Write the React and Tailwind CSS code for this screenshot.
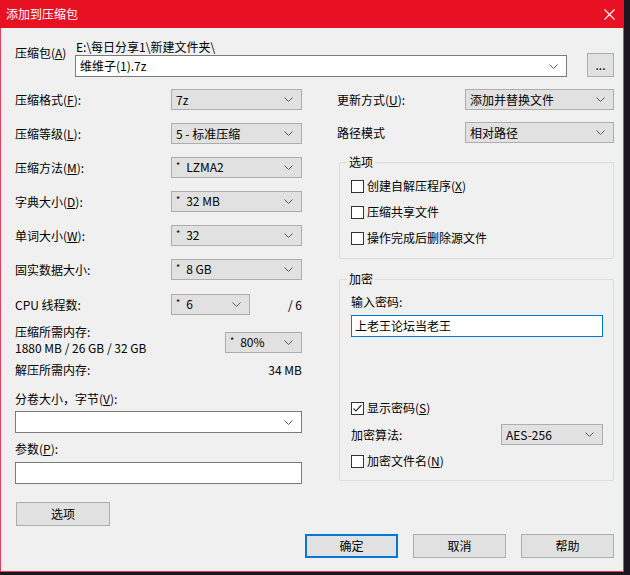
import React from 'react';

function Chevron() {
  return (
    <svg width="9" height="5" viewBox="0 0 9 5" className="shrink-0">
      <path d="M0.5 0.5 L4.5 4.5 L8.5 0.5" fill="none" stroke="#5a5a5a" strokeWidth="1" />
    </svg>
  );
}

function Star() {
  return <span className="text-[9px] relative -top-[3px] mr-[6px]">*</span>;
}

// 下拉框
function Combo({ value, star, white, className = '' }) {
  return (
    <div
      className={`flex items-center justify-between border pl-[4px] pr-[8px] leading-[16px] ${
        white ? 'bg-white border-[#7a7a7a]' : 'bg-[#e1e1e1] border-[#adadad]'
      } ${className}`}
    >
      <span className="whitespace-nowrap">
        {star && <Star />}
        {value}
      </span>
      <Chevron />
    </div>
  );
}

function Check({ checked, children }) {
  return (
    <div className="flex items-center h-[16px] leading-[16px]">
      <span className="w-[13px] h-[13px] border border-[#333333] bg-white flex items-center justify-center mr-[3px]">
        {checked && (
          <svg width="11" height="11" viewBox="0 0 11 11">
            <path d="M1.5 5.5 L4 8 L9.5 2" fill="none" stroke="#333333" strokeWidth="1.2" />
          </svg>
        )}
      </span>
      <span>{children}</span>
    </div>
  );
}

function Button({ children, primary, className = '' }) {
  return (
    <div
      className={`flex items-center justify-center bg-[#e1e1e1] h-[24px] w-[93px] ${
        primary ? 'border-2 border-[#0078d7]' : 'border border-[#adadad]'
      } ${className}`}
    >
      {children}
    </div>
  );
}

function Row({ label, children }) {
  return (
    <div className="flex items-center justify-between h-[21px]">
      <span className="leading-[16px]">{label}</span>
      {children}
    </div>
  );
}

function Group({ title, className = '', children }) {
  return (
    <div className={`relative border border-[#dcdcdc] rounded-[2px] ${className}`}>
      <span className="absolute -top-[9px] left-[7px] bg-[#f0f0f0] px-[2px] leading-[16px]">{title}</span>
      {children}
    </div>
  );
}

export default function App() {
  return (
    <div className="w-[630px] h-[575px] bg-[#1b1620] text-[12px] text-black font-['Noto_Sans_CJK_SC','Noto_Sans',sans-serif]">
      <div className="w-[624px] h-[572px] flex flex-col">
        {/* 标题栏 */}
        <div className="h-[28px] bg-[#e81123] flex items-center justify-between pl-[6px] pr-[9px] text-white">
          <span className="text-[12px]">添加到压缩包</span>
          <svg width="11" height="11" viewBox="0 0 11 11">
            <path d="M0.5 0.5 L10.5 10.5 M10.5 0.5 L0.5 10.5" stroke="#ffffff" strokeWidth="1.1" />
          </svg>
        </div>

        <div className="flex-1 bg-[#f0f0f0] border border-t-0 border-[#e0405a] pl-[14px] pr-[8px]">
          {/* 压缩包 */}
          <div className="flex pt-[10px]">
            <div className="w-[60px] pt-[7px] leading-[16px]">
              压缩包(<u>A</u>)
            </div>
            <div className="flex flex-col w-[492px]">
              <div className="h-[17px] leading-[17px] pl-[1px]">E:\每日分享1\新建文件夹\</div>
              <Combo white value="维维子(1).7z" className="h-[22px]" />
            </div>
            <Button className="ml-[20px] mt-[15px] !w-[27px] !h-[24px]">...</Button>
          </div>

          <div className="flex mt-[12px]">
            {/* 左栏 */}
            <div className="w-[287px] flex flex-col">
              <Row label={<>压缩格式(<u>F</u>):</>}>
                <Combo value="7z" className="w-[131px] h-[21px]" />
              </Row>
              <div className="mt-[13px]">
                <Row label={<>压缩等级(<u>L</u>):</>}>
                  <Combo value="5 - 标准压缩" className="w-[131px] h-[21px]" />
                </Row>
              </div>
              <div className="mt-[13px]">
                <Row label={<>压缩方法(<u>M</u>):</>}>
                  <Combo star value="LZMA2" className="w-[131px] h-[21px]" />
                </Row>
              </div>
              <div className="mt-[13px]">
                <Row label={<>字典大小(<u>D</u>):</>}>
                  <Combo star value="32 MB" className="w-[131px] h-[21px]" />
                </Row>
              </div>
              <div className="mt-[13px]">
                <Row label={<>单词大小(<u>W</u>):</>}>
                  <Combo star value="32" className="w-[131px] h-[21px]" />
                </Row>
              </div>
              <div className="mt-[13px]">
                <Row label="固实数据大小:">
                  <Combo star value="8 GB" className="w-[131px] h-[21px]" />
                </Row>
              </div>

              <div className="flex items-center h-[21px] mt-[14px]">
                <span className="w-[156px] leading-[16px]">CPU 线程数:</span>
                <Combo star value="6" className="w-[79px] h-[21px]" />
                <span className="flex-1 text-right leading-[16px]">/ 6</span>
              </div>

              <div className="flex justify-between h-[32px] mt-[9px]">
                <div className="leading-[16px]">
                  <div>压缩所需内存:</div>
                  <div>1880 MB / 26 GB / 32 GB</div>
                </div>
                <Combo star value="80%" className="w-[77px] h-[21px] mt-[8px]" />
              </div>

              <div className="flex justify-between h-[16px] leading-[16px] mt-[6px]">
                <span>解压所需内存:</span>
                <span>34 MB</span>
              </div>

              <div className="mt-[13px] leading-[16px]">
                分卷大小，字节(<u>V</u>):
              </div>
              <Combo white value="" className="h-[22px] mt-[4px]" />

              <div className="mt-[8px] leading-[16px]">
                参数(<u>P</u>):
              </div>
              <div className="h-[22px] mt-[5px] bg-white border border-[#7a7a7a]" />

              <Button className="mt-[18px] ml-[1px] !w-[94px]">选项</Button>
            </div>

            {/* 右栏 */}
            <div className="ml-[35px] w-[277px] flex flex-col">
              <Row label={<>更新方式(<u>U</u>):</>}>
                <Combo value="添加并替换文件" className="w-[149px] h-[21px]" />
              </Row>
              <div className="mt-[12px]">
                <Row label="路径模式">
                  <Combo value="相对路径" className="w-[149px] h-[21px]" />
                </Row>
              </div>

              <Group title="选项" className="mt-[19px] h-[97px] ml-[2px]">
                <div className="flex flex-col gap-[10px] pt-[15px] pl-[11px]">
                  <Check>
                    创建自解压程序(<u>X</u>)
                  </Check>
                  <Check>压缩共享文件</Check>
                  <Check>操作完成后删除源文件</Check>
                </div>
              </Group>

              <Group title="加密" className="mt-[20px] h-[202px] ml-[2px]">
                <div className="flex flex-col pt-[14px] pl-[11px] w-[263px]">
                  <div className="leading-[16px]">输入密码:</div>
                  <div className="h-[22px] w-[252px] mt-[5px] bg-white border border-[#0078d7] flex items-center pl-[3px] leading-[16px]">
                    上老王论坛当老王
                  </div>
                  <div className="mt-[63px]">
                    <Check checked>
                      显示密码(<u>S</u>)
                    </Check>
                  </div>
                  <div className="mt-[8px] w-[252px]">
                    <Row label="加密算法:">
                      <Combo value="AES-256" className="w-[102px] h-[21px]" />
                    </Row>
                  </div>
                  <div className="mt-[8px]">
                    <Check>
                      加密文件名(<u>N</u>)
                    </Check>
                  </div>
                </div>
              </Group>
            </div>
          </div>

          {/* 底部按钮 */}
          <div className="flex justify-end gap-[15px] mt-[8px] mr-[1px]">
            <Button primary>确定</Button>
            <Button>取消</Button>
            <Button>帮助</Button>
          </div>
        </div>
      </div>
    </div>
  );
}
